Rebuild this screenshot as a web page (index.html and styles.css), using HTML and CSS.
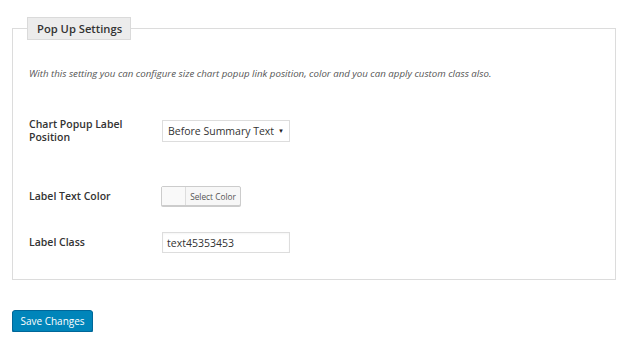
FILE: index.html
```html
<!DOCTYPE html>
<html>
<head>
<meta charset="utf-8">
<link rel="stylesheet" href="styles.css">
</head>
<body>
<div class="page">
  <fieldset class="box">
    <legend class="legend">Pop Up Settings</legend>
    <p class="desc">With this setting you can configure size chart popup link position, color and you can apply custom class also.</p>
    <div class="row row-pos">
      <div class="label">Chart Popup Label<br>Position</div>
      <div class="select"><span>Before Summary Text</span><span class="caret">&#9660;</span></div>
    </div>
    <div class="row row-color">
      <div class="label">Label Text Color</div>
      <div class="colorpick"><span class="swatch"></span><span class="pick-text">Select Color</span></div>
    </div>
    <div class="row row-class">
      <div class="label">Label Class</div>
      <div class="input">text45353453</div>
    </div>
  </fieldset>
  <button class="save">Save Changes</button>
</div>
</body>
</html>
```
FILE: styles.css
```css
html, body { margin: 0; padding: 0; background: #fff; }
body { font-family: "Open Sans", "Noto Sans", sans-serif; color: #333; }
.page { padding: 17px 12px 0 12px; width: 604px; }
.box {
  margin: 0;
  border: 1px solid #dcdcdc;
  padding: 0 16px 0 16px;
  height: 263px;
  box-sizing: border-box;
  width: 604px;
}
.legend {
  margin-left: -2px;
  background: #ececec;
  border: 1px solid #dadada;
  font-size: 11.2px;
  font-weight: 600;
  color: #333;
  line-height: 21px;
  height: 23px;
  box-sizing: border-box;
  padding: 0 8px 0 9px;
}
.desc {
  margin: 27px 0 0 0;
  font-style: italic;
  font-size: 9.7px;
  color: #555;
  line-height: 14px;
}
.row { display: flex; align-items: center; }
.label { width: 133px; font-size: 10.5px; font-weight: 600; color: #333; line-height: 13px; }
.row-pos { margin-top: 37px; }
.row-color { margin-top: 42px; }
.row-class { margin-top: 26px; }
.select {
  width: 128px; height: 22px; box-sizing: border-box;
  border: 1px solid #ddd; background: #fff;
  font-size: 10.5px; color: #333; padding: 0 5px;
  display: flex; align-items: center; justify-content: space-between;
}
.caret { font-size: 6px; color: #222; }
.colorpick {
  margin-left: -1px;
  width: 80px; height: 20px; box-sizing: border-box;
  border: 1px solid #ccc; border-radius: 2px; background: #f7f7f7;
  display: flex; box-shadow: 0 1px 0 #ccc;
}
.swatch { width: 23px; border-right: 1px solid #ddd; background: #f9f9f9; }
.pick-text { flex: 1; font-size: 8.3px; color: #555; display: flex; align-items: center; justify-content: center; }
.input {
  width: 128px; height: 21px; box-sizing: border-box;
  border: 1px solid #ddd; font-size: 10.5px; color: #333;
  padding: 0 4px; display: flex; align-items: center;
  box-shadow: inset 0 1px 2px rgba(0,0,0,0.04);
}
.save {
  margin-top: 30px; display: block;
  width: 81px; height: 22px;
  background: #0085ba; border: 1px solid #006799; border-radius: 3px;
  color: #fff; font-family: "Open Sans", sans-serif; font-size: 10px;
  padding: 0; box-shadow: 0 1px 0 #006799;
}
```
